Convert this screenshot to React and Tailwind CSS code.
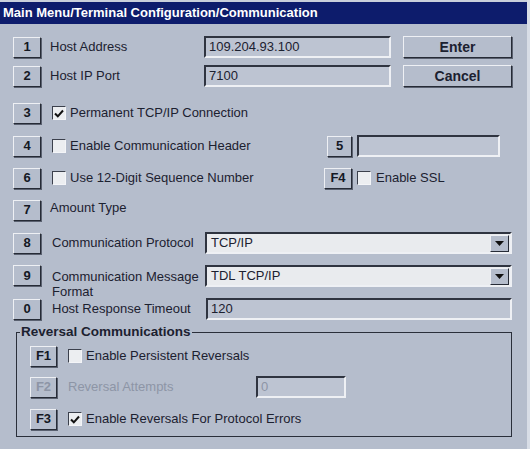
import React from "react";

const font = { fontFamily: '"Liberation Sans", Arial, sans-serif' };

const Key = ({ label, disabled, className = "" }) => (
  <div
    className={`flex items-center justify-center h-[21px] border border-t-[#eef0f4] border-l-[#eef0f4] border-b-[#262b36] border-r-[#262b36] shadow-[1px_1px_0_#5a6170] text-[13px] font-bold ${
      disabled ? "text-[#8d95a6]" : "text-[#141824]"
    } ${className}`}
  >
    {label}
  </div>
);

const Check = ({ checked, className = "" }) => (
  <div
    className={`w-[14px] h-[14px] shrink-0 bg-[#eceef1] border border-t-[#3b404c] border-l-[#3b404c] border-b-[#f4f5f8] border-r-[#f4f5f8] flex items-center justify-center ${className}`}
  >
    {checked && (
      <svg width="10" height="9" viewBox="0 0 10 9">
        <path d="M1 4.5 L3.8 7.3 L9 1.5" fill="none" stroke="#111" strokeWidth="2" />
      </svg>
    )}
  </div>
);

const Field = ({ value, className = "", light, muted }) => (
  <div
    className={`h-[22px] flex items-center pl-[3px] border-2 border-t-[#2f3440] border-l-[#2f3440] border-b-[#eef0f4] border-r-[#eef0f4] text-[13px] ${
      light ? "bg-[#e8eaee]" : "bg-[#bdc4d2]"
    } ${muted ? "text-[#8d95a6]" : "text-[#1c2130]"} ${className}`}
  >
    {value}
  </div>
);

const Select = ({ value }) => (
  <div className="h-[22px] ml-auto w-[307px] shrink-0 flex items-center pl-[4px] pr-[1px] bg-[#e9ebee] border-2 border-t-[#2f3440] border-l-[#2f3440] border-b-[#eef0f4] border-r-[#eef0f4] text-[13px] text-[#1c2130]">
    <span className="flex-1">{value}</span>
    <div className="w-[19px] h-[17px] flex items-center justify-center bg-[#b5bdcc] border border-t-[#eef0f4] border-l-[#eef0f4] border-b-[#262b36] border-r-[#262b36]">
      <svg width="9" height="5" viewBox="0 0 9 5">
        <path d="M0 0 H9 L4.5 5 Z" fill="#111" />
      </svg>
    </div>
  </div>
);

export default function App() {
  return (
    <div className="w-[530px] h-[449px] bg-[#b5bdcc] text-[#1c2130] overflow-hidden border-r-[3px] border-r-[#d8dde6]" style={font}>
      <div className="h-[24px] bg-[#0d1c6c] border-t-2 border-t-[#c9cfdb] flex items-center pl-[3px] text-white font-bold text-[13px]">
        Main Menu/Terminal Configuration/Communication
      </div>

      <div className="pl-[13px] pr-[15px]">
        {/* row 1 */}
        <div className="flex items-center h-[22px] mt-[12px]">
          <Key label="1" className="w-[28px]" />
          <span className="ml-[9px] text-[13px] w-[154px]">Host Address</span>
          <Field value="109.204.93.100" className="w-[187px]" />
          <div className="ml-auto w-[109px] h-[22px] flex items-center justify-center text-[14px] font-bold border border-t-[#eef0f4] border-l-[#eef0f4] border-b-[#262b36] border-r-[#262b36] shadow-[1px_1px_0_#5a6170]">
            Enter
          </div>
        </div>

        {/* row 2 */}
        <div className="flex items-center h-[22px] mt-[7px]">
          <Key label="2" className="w-[28px]" />
          <span className="ml-[9px] text-[13px] w-[154px]">Host IP Port</span>
          <Field value="7100" className="w-[187px]" />
          <div className="ml-auto w-[109px] h-[22px] flex items-center justify-center text-[14px] font-bold border border-t-[#eef0f4] border-l-[#eef0f4] border-b-[#262b36] border-r-[#262b36] shadow-[1px_1px_0_#5a6170]">
            Cancel
          </div>
        </div>

        {/* row 3 */}
        <div className="flex items-center h-[22px] mt-[15px]">
          <Key label="3" className="w-[28px]" />
          <Check checked className="ml-[11px]" />
          <span className="ml-[4px] text-[13px]">Permanent TCP/IP Connection</span>
        </div>

        {/* row 4 */}
        <div className="flex items-center h-[22px] mt-[11px]">
          <Key label="4" className="w-[28px]" />
          <Check className="ml-[11px]" />
          <span className="ml-[4px] text-[13px] w-[257px]">Enable Communication Header</span>
          <Key label="5" className="w-[25px]" />
          <Field value="" className="ml-[5px] w-[143px]" />
        </div>

        {/* row 6 */}
        <div className="flex items-center h-[22px] mt-[10px]">
          <Key label="6" className="w-[28px]" />
          <Check className="ml-[11px]" />
          <span className="ml-[4px] text-[13px] w-[254px]">Use 12-Digit Sequence Number</span>
          <Key label="F4" className="w-[28px]" />
          <Check className="ml-[5px]" />
          <span className="ml-[5px] text-[13px]">Enable SSL</span>
        </div>

        {/* row 7 */}
        <div className="flex items-center h-[22px] mt-[10px]">
          <Key label="7" className="w-[28px]" />
          <span className="ml-[9px] text-[13px] -mt-[4px]">Amount Type</span>
        </div>

        {/* row 8 */}
        <div className="flex items-center h-[22px] mt-[11px]">
          <Key label="8" className="w-[28px]" />
          <span className="ml-[11px] text-[13px]">Communication Protocol</span>
          <Select value="TCP/IP" />
        </div>

        {/* row 9 */}
        <div className="flex items-start h-[22px] mt-[11px]">
          <Key label="9" className="w-[28px]" />
          <span className="ml-[11px] text-[13px] leading-[15px] pt-[4px] w-[152px]">
            Communication Message Format
          </span>
          <Select value="TDL TCP/IP" />
        </div>

        {/* row 0 */}
        <div className="flex items-center h-[22px] mt-[11px]">
          <Key label="0" className="w-[28px]" />
          <span className="ml-[11px] text-[13px]">Host Response Timeout</span>
          <Field value="120" className="ml-auto w-[306px]" />
        </div>

        {/* reversal group */}
        <div className="relative mt-[12px] ml-[3px] h-[105px] border border-[#2a2f3a] pl-[13px]">
          <span className="absolute -top-[9px] left-[3px] px-[1px] bg-[#b5bdcc] text-[13.5px] font-bold leading-[16px]">
            Reversal Communications
          </span>
          <div className="flex items-center h-[22px] mt-[12px]">
            <Key label="F1" className="w-[27px]" />
            <Check className="ml-[11px]" />
            <span className="ml-[4px] text-[13px]">Enable Persistent Reversals</span>
          </div>
          <div className="flex items-center h-[22px] mt-[9px]">
            <Key label="F2" disabled className="w-[27px]" />
            <span className="ml-[11px] text-[13px] text-[#8d95a6] w-[188px]">Reversal Attempts</span>
            <Field value="0" muted className="w-[90px]" />
          </div>
          <div className="flex items-center h-[22px] mt-[10px]">
            <Key label="F3" className="w-[27px]" />
            <Check checked className="ml-[11px]" />
            <span className="ml-[4px] text-[13px]">Enable Reversals For Protocol Errors</span>
          </div>
        </div>
      </div>
    </div>
  );
}
